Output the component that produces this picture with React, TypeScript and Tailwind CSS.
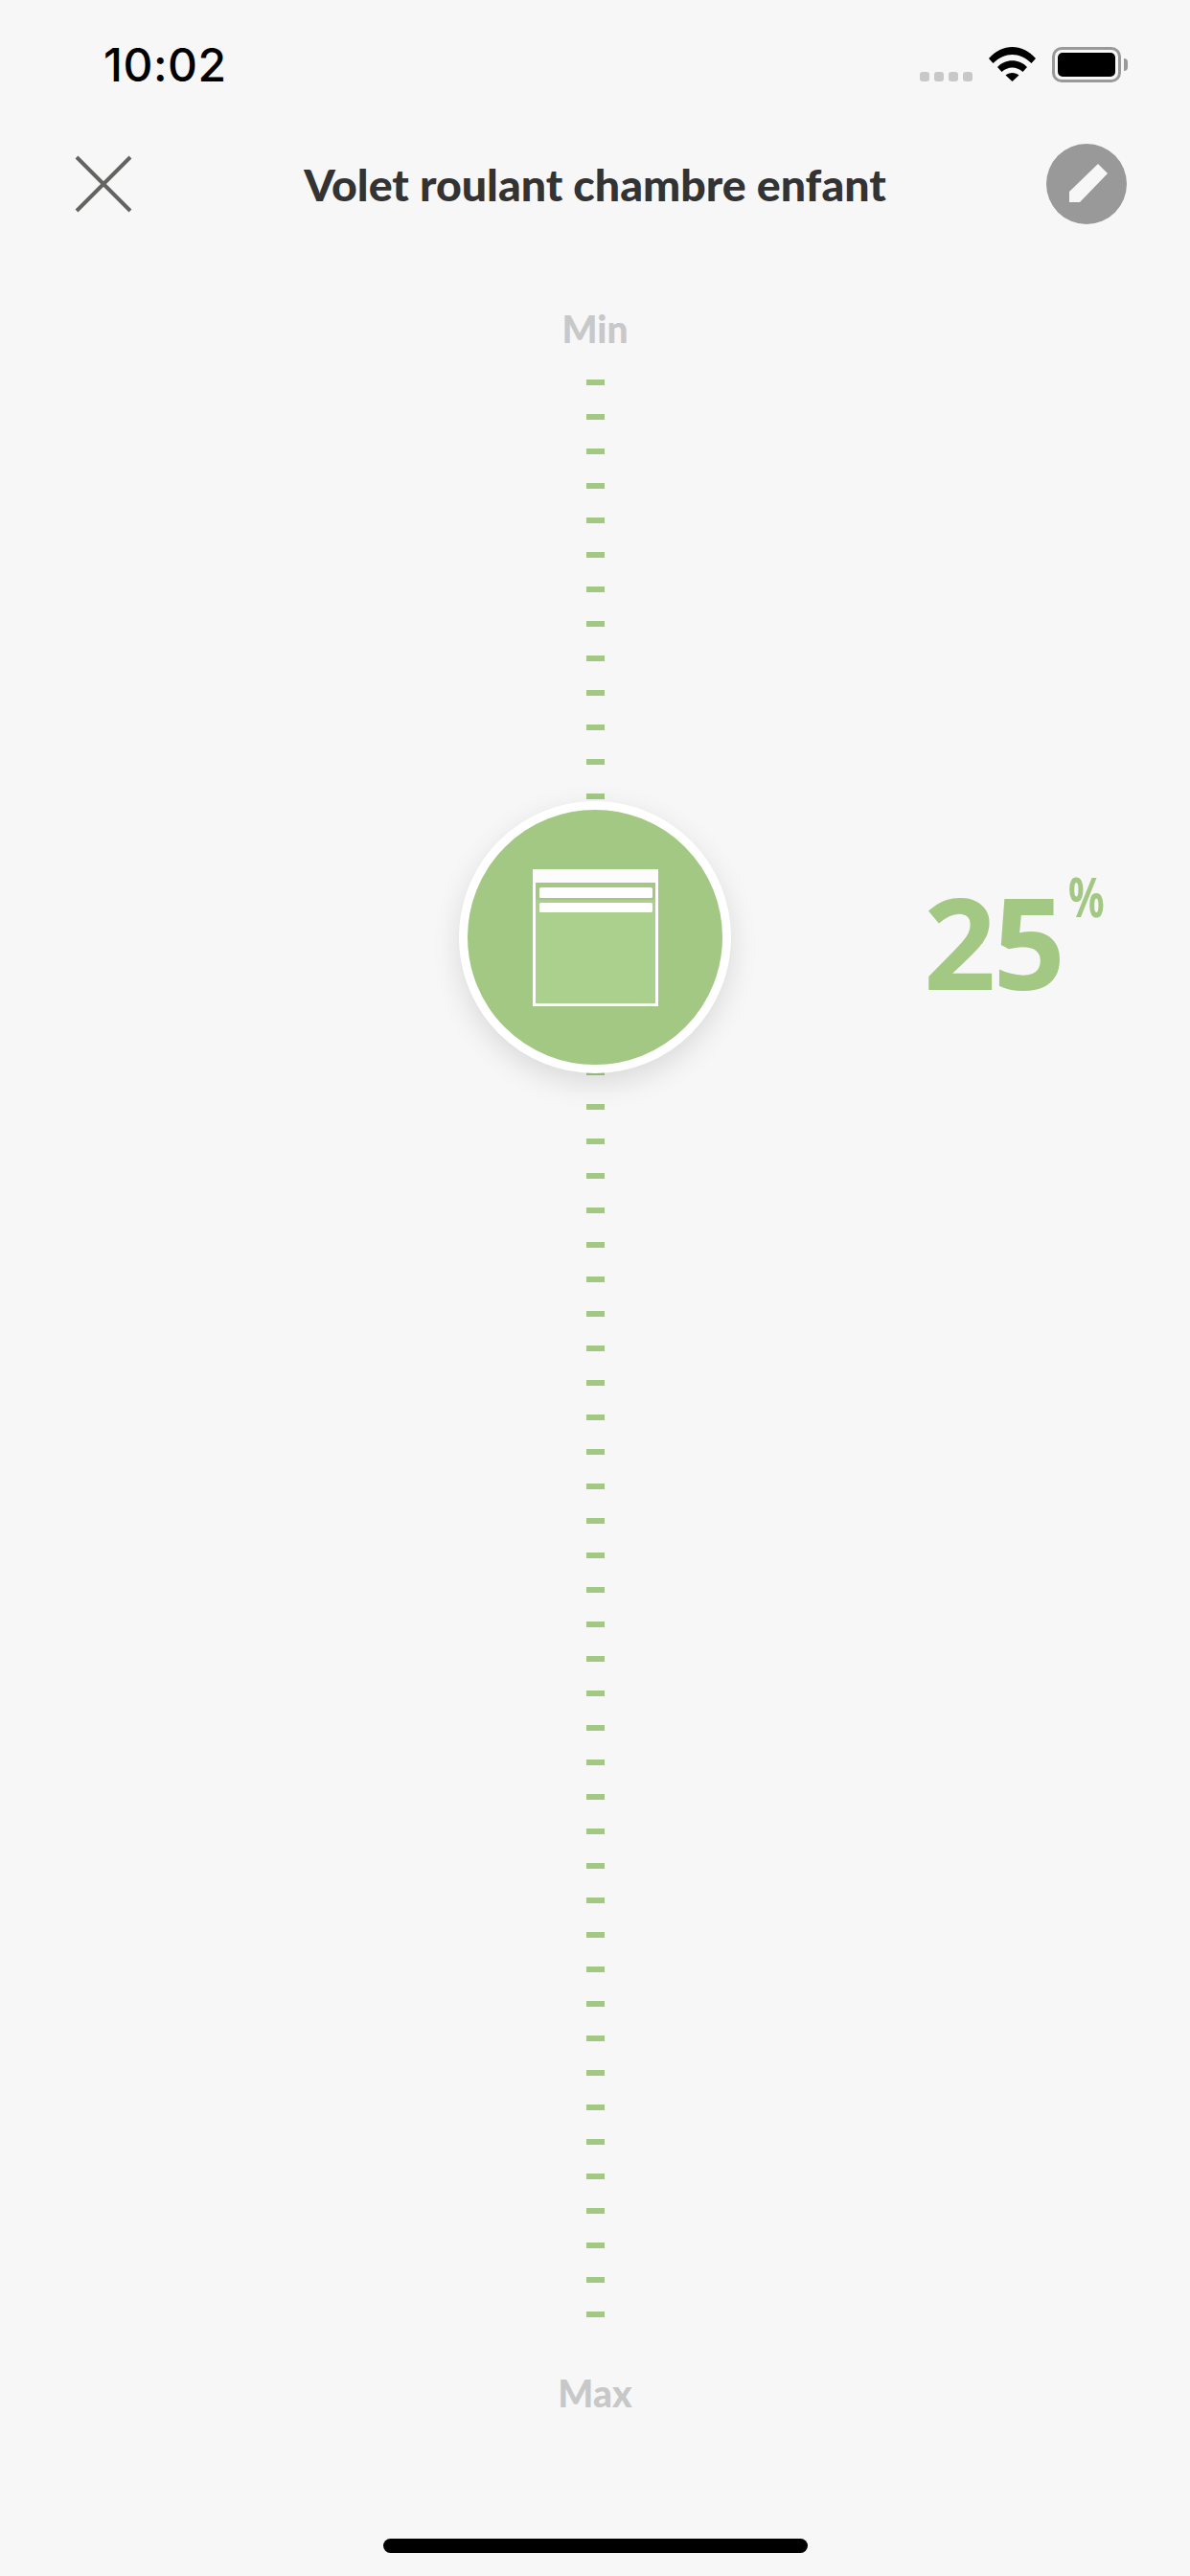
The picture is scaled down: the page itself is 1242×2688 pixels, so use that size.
import React from 'react';

const TICK_COUNT = 57;
const brandFont = "font-['Lato','Noto_Sans',sans-serif]";

function StatusBar() {
  return (
    <div className="flex h-[136px] shrink-0 items-start justify-between pl-[108px] pr-[65px] pt-[39px]">
      <span className="font-['Inter',sans-serif] text-[48px] leading-[58px] font-medium tracking-[0.5px] text-black">10:02</span>
      <div className="flex items-start pt-[10px]">
        <div className="mt-[26px] flex gap-[5px]">
          {[0, 1, 2, 3].map((i) => (
            <span key={i} className="h-[10px] w-[10px] rounded-[3px] bg-[#c8c8c8]" />
          ))}
        </div>
        <svg className="ml-[17px]" width="49" height="36" viewBox="0 0 49 36">
          <path d="M0 12 C14 -4 35 -4 49 12 L44.500 17 C32 5 17 5 4.500 17 Z" fill="#000" />
          <path d="M9 21 C17 12 32 12 40 21 L35.500 26 C29 20 20 20 13.500 26 Z" fill="#000" />
          <path d="M17.500 29.500 C21 26 28 26 31.500 29.500 L24.500 36 Z" fill="#000" />
        </svg>
        <div className="ml-[17px] flex items-center">
          <div className="flex h-[37px] w-[72px] items-center justify-center rounded-[10px] border-[3px] border-[#999999]">
            <div className="h-[25px] w-[60px] rounded-[5px] bg-black" />
          </div>
          <span className="ml-[3px] h-[13px] w-[4px] rounded-r-[4px] bg-[#999999]" />
        </div>
      </div>
    </div>
  );
}

function NavBar() {
  return (
    <div className="grid h-[112px] shrink-0 grid-cols-[1fr_auto_1fr] items-center px-[66px]">
      <svg className="ml-[12px]" width="60" height="60" viewBox="0 0 60 60">
        <path d="M2 2 L58 58 M58 2 L2 58" stroke="#636361" strokeWidth="4" fill="none" />
      </svg>
      <h1 className={`${brandFont} text-[46.5px] leading-none font-black text-[#333333]`}>Volet roulant chambre enfant</h1>
      <button className="h-[84px] w-[84px] justify-self-end rounded-full bg-[#999999]">
        <svg width="84" height="84" viewBox="0 0 84 84">
          <polygon points="54,21 64,31 35,61 24,61 24,50" fill="#f7f7f7" />
        </svg>
      </button>
    </div>
  );
}

function ShutterIcon() {
  return (
    <svg width="131" height="143" viewBox="0 0 131 143">
      <rect x="1.500" y="1.500" width="128" height="140" fill="#abcf8d" stroke="#fff" strokeWidth="3" />
      <rect x="3" y="14" width="125" height="18" fill="#a3c884" />
      <rect width="131" height="14" fill="#fcfcfc" />
      <rect x="7" y="19" width="118" height="11" rx="1.500" fill="#fff" />
      <rect x="7" y="35" width="118" height="10" rx="1.500" fill="#fff" />
    </svg>
  );
}

function Slider() {
  return (
    <div className="relative flex flex-col items-center gap-[30px]">
      {Array.from({ length: TICK_COUNT }).map((_, i) => (
        <span key={i} className="h-[6px] w-[19px] shrink-0 bg-[#a3c884]" />
      ))}
      <div className="absolute left-[479px] top-[440px] flex h-[284px] w-[284px] items-center justify-center rounded-full border-[9px] border-white bg-[#a3c884] shadow-[0_10px_30px_rgba(0,0,0,0.12)]">
        <ShutterIcon />
      </div>
      <div className="absolute left-[964px] top-[516px] flex items-start font-['Noto_Sans',sans-serif] font-bold text-[#a3c884]">
        <span className="text-[132px] leading-[140px] tracking-[-3px]">25</span>
        <span className="ml-[6px] -mt-[7px] origin-left scale-x-[0.72] text-[58px] leading-[60px]">%</span>
      </div>
    </div>
  );
}

export default function App() {
  return (
    <div className="flex h-[2688px] w-[1242px] flex-col overflow-hidden bg-[#f7f7f7]">
      <StatusBar />
      <NavBar />
      <div className={`${brandFont} flex h-[148px] shrink-0 items-start justify-center pt-[70px] text-[39px] leading-[50px] font-black text-[#c8c8c8]`}>Min</div>
      <Slider />
      <div className={`${brandFont} flex shrink-0 justify-center pt-[54px] text-[39px] leading-[50px] font-black text-[#c8c8c8]`}>Max</div>
      <div className="mt-[127px] h-[15px] w-[443px] shrink-0 self-center rounded-full bg-black" />
    </div>
  );
}
